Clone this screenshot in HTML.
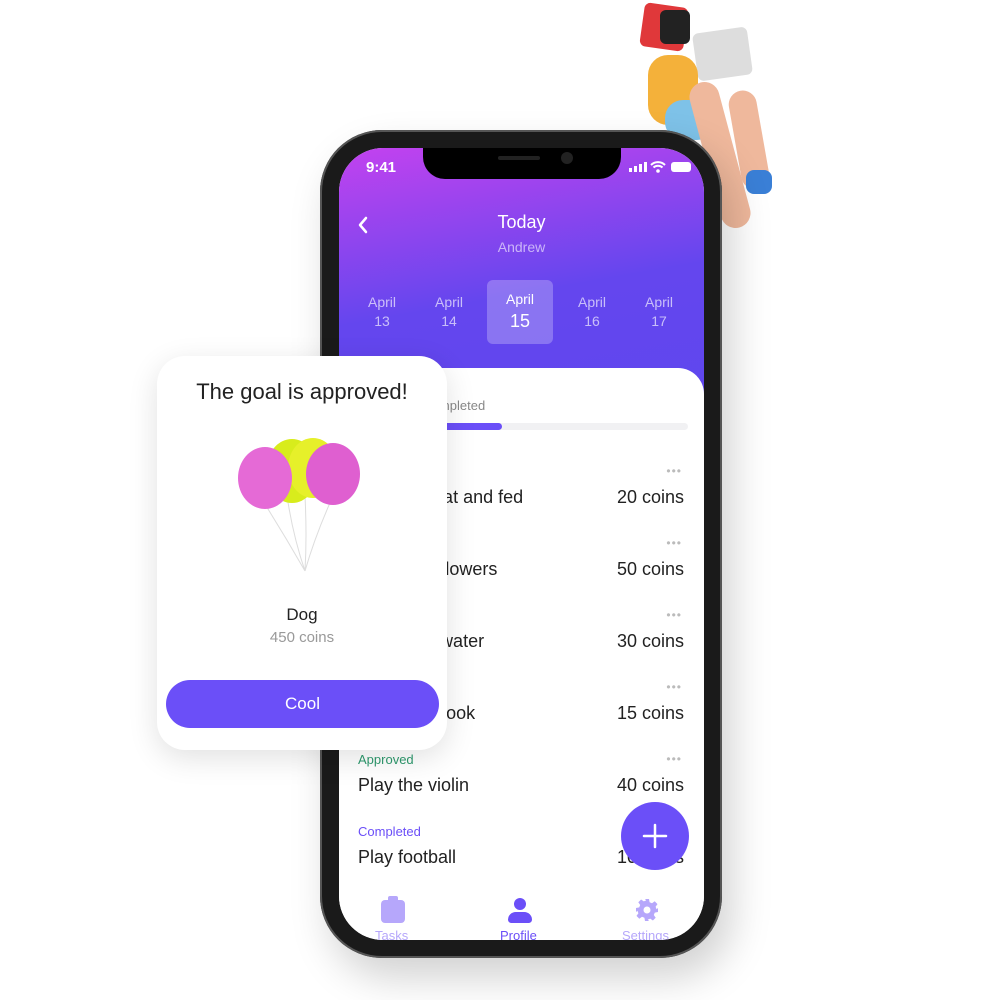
<!DOCTYPE html>
<html><head><style>
body{margin:0;width:1000px;height:1000px;background:#fff;position:relative;overflow:hidden;font-family:"Liberation Sans",sans-serif}
.abs{position:absolute}
.phone{left:320px;top:130px;width:402px;height:828px;border-radius:62px;background:#1a1a1a;box-shadow:0 0 0 2px #555 inset,10px 20px 40px rgba(0,0,0,.18)}
.screen{left:339px;top:148px;width:365px;height:792px;border-radius:44px;overflow:hidden;background:#fff}
.hdr{left:0;top:0;width:365px;height:260px;background:linear-gradient(170deg,#c342ef 0%,#8f45ee 30%,#6446ee 55%,#5f47ee 100%)}
.notch{left:84px;top:0;width:198px;height:31px;background:#000;border-radius:0 0 22px 22px}
.w{color:#fff}
.day{width:66px;text-align:center;color:rgba(255,255,255,.65);font-size:14px;line-height:19px;top:145px}
.card{left:0;top:220px;width:365px;height:600px;background:#fff;border-radius:26px 26px 0 0}
.row{left:19px;width:326px}
.lbl{font-size:13px}
.t{font-size:18px;color:#222}
.c{right:0;font-size:18px;color:#222}
.dots{right:2px;color:#bbb;font-size:12px;letter-spacing:1px}
.pop{left:157px;top:356px;width:290px;height:394px;border-radius:28px;background:#fff;box-shadow:0 8px 30px rgba(0,0,0,.12)}
</style></head><body>
<!-- character -->
<div class="abs" style="left:642px;top:5px;width:44px;height:44px;background:#e0383a;border-radius:6px;transform:rotate(8deg)"></div>
<div class="abs" style="left:660px;top:10px;width:30px;height:34px;background:#222;border-radius:6px"></div>
<div class="abs" style="left:695px;top:30px;width:55px;height:48px;background:#ddd;border-radius:6px;transform:rotate(-8deg)"></div>
<div class="abs" style="left:648px;top:55px;width:50px;height:70px;background:#f4b13a;border-radius:20px"></div>
<div class="abs" style="left:665px;top:100px;width:50px;height:40px;background:#7ec2e8;border-radius:18px"></div>
<div class="abs" style="left:705px;top:80px;width:30px;height:150px;background:#efb89c;border-radius:16px;transform:rotate(-15deg)"></div>
<div class="abs" style="left:735px;top:90px;width:28px;height:100px;background:#efb89c;border-radius:16px;transform:rotate(-10deg)"></div>
<div class="abs" style="left:746px;top:170px;width:26px;height:24px;background:#3a7fd6;border-radius:8px"></div>
<div class="abs" style="left:697px;top:222px;width:22px;height:28px;background:#3a7fd6;border-radius:8px"></div>

<div class="abs phone"></div>
<div class="abs screen">
 <div class="abs hdr"></div>
 <div class="abs notch"></div>
 <div class="abs" style="left:159px;top:8px;width:42px;height:4px;background:#222;border-radius:2px"></div>
 <div class="abs" style="left:222px;top:4px;width:12px;height:12px;background:#222;border-radius:50%"></div>
 <div class="abs w" style="left:27px;top:11px;font-size:15px;font-weight:bold">9:41</div>
 <div class="abs" style="left:290px;top:14px;display:flex;gap:2px;align-items:flex-end"><i style="width:3px;height:4px;background:#fff"></i><i style="width:3px;height:6px;background:#fff"></i><i style="width:3px;height:8px;background:#fff"></i><i style="width:3px;height:10px;background:#fff"></i></div>
 <svg class="abs" style="left:311px;top:13px" width="16" height="12" viewBox="0 0 16 12"><path d="M1 4a10 10 0 0 1 14 0M3.5 6.5a6.5 6.5 0 0 1 9 0" stroke="#fff" stroke-width="2" fill="none"/><circle cx="8" cy="10" r="1.8" fill="#fff"/></svg>
 <div class="abs" style="left:332px;top:14px;width:18px;height:8px;border:1.5px solid rgba(255,255,255,.8);border-radius:3px;background:#fff"></div>
 <svg class="abs" style="left:18px;top:68px" width="12" height="18" viewBox="0 0 12 18"><path d="M9 2 3 9l6 7" stroke="#fff" stroke-width="2.5" fill="none" stroke-linecap="round" stroke-linejoin="round"/></svg>
 <div class="abs w" style="left:0;width:365px;text-align:center;top:64px;font-size:18px">Today</div>
 <div class="abs" style="left:0;width:365px;text-align:center;top:91px;font-size:14px;color:rgba(255,255,255,.6)">Andrew</div>
 <div class="abs day" style="left:10px">April<br>13</div>
 <div class="abs day" style="left:77px">April<br>14</div>
 <div class="abs" style="left:148px;top:132px;width:66px;height:64px;border-radius:6px;background:rgba(255,255,255,.25)"></div>
 <div class="abs day" style="left:148px;top:142px;color:#fff">April<br><span style="font-size:18px;line-height:24px">15</span></div>
 <div class="abs day" style="left:220px">April<br>16</div>
 <div class="abs day" style="left:287px">April<br>17</div>
 <div class="card abs">
  <div class="abs" style="left:19px;top:30px;font-size:13px;color:#888">6 tasks are completed</div>
  <div class="abs" style="left:19px;top:55px;width:330px;height:7px;border-radius:4px;background:#f1f1f3"><div style="width:144px;height:7px;border-radius:4px;background:#6b4ff8"></div></div>
 </div>
 <div class="abs row" style="top:316px"><span class="abs lbl" style="color:#ee6a96">Special</span><span class="abs dots">•••</span></div>
 <div class="abs row" style="top:339px"><span class="abs t">Feed the cat and fed</span><span class="abs c">20 coins</span></div>
 <div class="abs row" style="top:388px"><span class="abs dots">•••</span></div>
 <div class="abs row" style="top:411px"><span class="abs t">Water the flowers</span><span class="abs c">50 coins</span></div>
 <div class="abs row" style="top:460px"><span class="abs dots">•••</span></div>
 <div class="abs row" style="top:483px"><span class="abs t">Clean the water</span><span class="abs c">30 coins</span></div>
 <div class="abs row" style="top:532px"><span class="abs dots">•••</span></div>
 <div class="abs row" style="top:555px"><span class="abs t">Read the book</span><span class="abs c">15 coins</span></div>
 <div class="abs row" style="top:604px"><span class="abs lbl" style="color:#2e9a6e">Approved</span><span class="abs dots">•••</span></div>
 <div class="abs row" style="top:627px"><span class="abs t">Play the violin</span><span class="abs c">40 coins</span></div>
 <div class="abs row" style="top:676px"><span class="abs lbl" style="color:#6b4ff8">Completed</span></div>
 <div class="abs row" style="top:699px"><span class="abs t">Play football</span><span class="abs c">10 coins</span></div>
 <div class="abs" style="left:282px;top:654px;width:68px;height:68px;border-radius:50%;background:#6b4ff8"></div>
 <svg class="abs" style="left:282px;top:654px" width="68" height="68"><path d="M34 23v22M23 34h22" stroke="#fff" stroke-width="2.5" stroke-linecap="round"/></svg>
 <div class="abs" style="left:42px;top:752px;width:24px;height:23px;background:#b6a7fb;border-radius:4px"></div>
 <div class="abs" style="left:49px;top:748px;width:10px;height:6px;background:#b6a7fb;border-radius:2px"></div>
 <div class="abs" style="left:175px;top:750px;width:12px;height:12px;border-radius:50%;background:#6b4ff8"></div>
 <div class="abs" style="left:169px;top:764px;width:24px;height:11px;border-radius:12px 12px 5px 5px;background:#6b4ff8"></div>
 <svg class="abs" style="left:296px;top:750px" width="24" height="24" viewBox="0 0 24 24"><path fill="#b6a7fb" d="M10 1h4l.6 3.2 2.4 1 2.7-1.9 2.8 2.8-1.9 2.7 1 2.4L23 10v4l-3.2.6-1 2.4 1.9 2.7-2.8 2.8-2.7-1.9-2.4 1L14 23h-4l-.6-3.2-2.4-1-2.7 1.9-2.8-2.8 1.9-2.7-1-2.4L1 14v-4l3.2-.6 1-2.4-1.9-2.7 2.8-2.8 2.7 1.9 2.4-1z"/><circle cx="12" cy="12" r="3.5" fill="#fff"/></svg>
 <div class="abs" style="left:36px;top:780px;font-size:13px;color:#b6a7fb">Tasks</div>
 <div class="abs" style="left:161px;top:780px;font-size:13px;color:#6b4ff8">Profile</div>
 <div class="abs" style="left:283px;top:780px;font-size:13px;color:#b6a7fb">Settings</div>
</div>

<div class="abs pop">
 <div class="abs" style="left:0;width:290px;text-align:center;top:23px;font-size:22px;color:#222">The goal is approved!</div>
 <svg class="abs" style="left:78px;top:80px" width="130" height="140" viewBox="0 0 130 140">
  <path d="M52 60 Q58 100 70 135 M70 60 Q72 100 70 135 M28 65 Q50 100 70 135 M98 60 Q80 100 70 135" stroke="#ddd" fill="none"/>
  <ellipse cx="57" cy="35" rx="26" ry="32" fill="#d8ec1c"/>
  <ellipse cx="78" cy="32" rx="25" ry="30" fill="#e6f02a"/>
  <ellipse cx="30" cy="42" rx="27" ry="31" fill="#e56ad6"/>
  <ellipse cx="98" cy="38" rx="27" ry="31" fill="#df5fd0"/>
 </svg>
 <div class="abs" style="left:0;width:290px;text-align:center;top:249px;font-size:17px;color:#222">Dog</div>
 <div class="abs" style="left:0;width:290px;text-align:center;top:273px;font-size:15px;color:#999">450 coins</div>
 <div class="abs" style="left:9px;top:324px;width:273px;height:48px;border-radius:24px;background:#6b4ff8;color:#fff;text-align:center;line-height:48px;font-size:17px">Cool</div>
</div>
</body></html>
